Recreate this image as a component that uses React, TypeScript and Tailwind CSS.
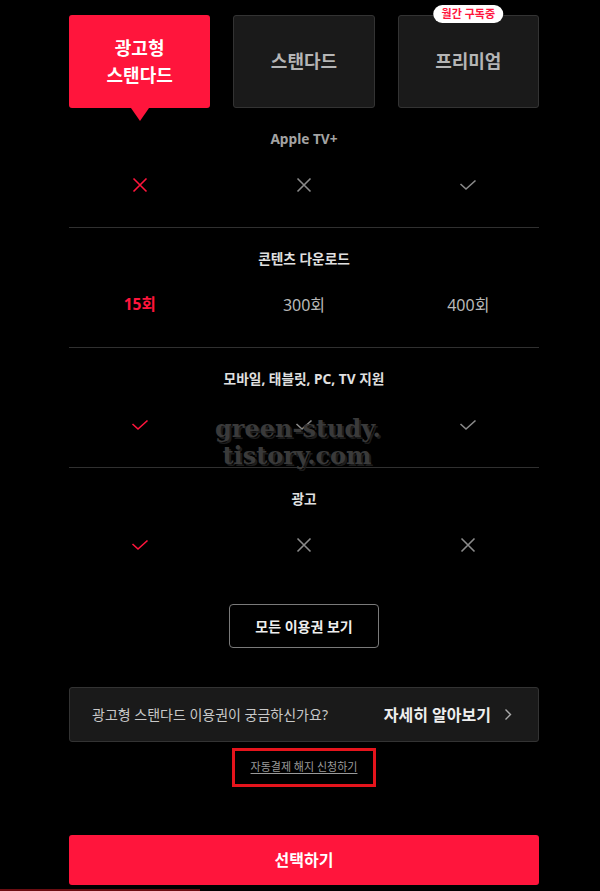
import React from "react";

const RED = "#ff153c";

function XIcon({ color }: { color: string }) {
  return (
    <svg width="18" height="18" viewBox="0 0 18 18" fill="none">
      <path d="M2.5 2.5 L15.5 15.5 M15.5 2.5 L2.5 15.5" stroke={color} strokeWidth="1.6" strokeLinecap="butt" />
    </svg>
  );
}

function CheckIcon({ color }: { color: string }) {
  return (
    <svg width="18" height="18" viewBox="0 0 18 18" fill="none">
      <path d="M1.5 8 L7 13 L16.5 4.5" stroke={color} strokeWidth="1.6" strokeLinecap="butt" strokeLinejoin="miter" />
    </svg>
  );
}

function Cell({ children }: { children: React.ReactNode }) {
  return <div className="flex h-6 items-center justify-center">{children}</div>;
}

function Section({
  label,
  labelClass,
  cells,
  divider = true,
}: {
  label: string;
  labelClass: string;
  cells: React.ReactNode[];
  divider?: boolean;
}) {
  return (
    <div className={`pt-[22px] pb-[30px] ${divider ? "border-b border-[#303030]" : ""}`}>
      <div className={`text-center text-[13.7px] font-bold leading-[18px] ${labelClass}`}>{label}</div>
      <div className="mt-[25px] grid grid-cols-3 gap-[23px]">
        {cells.map((c, i) => (
          <Cell key={i}>{c}</Cell>
        ))}
      </div>
    </div>
  );
}

export default function App() {
  const gray = "#8a8a8a";
  return (
    <div
      className="relative min-h-[891px] w-[600px] bg-black"
      style={{ fontFamily: '"Noto Sans", "Noto Sans CJK KR", sans-serif' }}
    >
      <div className="ml-[69px] w-[470px] pt-[15px]">
        {/* plan cards */}
        <div className="grid grid-cols-3 gap-[23px]">
          <div className="relative flex h-[93px] flex-col items-center justify-center rounded-[3px] bg-[#ff153c] text-[18px] font-bold leading-[27px] text-white">
            <span>광고형</span>
            <span>스탠다드</span>
            <div className="absolute left-1/2 top-full h-0 w-0 -translate-x-1/2 border-x-[9px] border-t-[13px] border-x-transparent border-t-[#ff153c]" />
          </div>
          <div className="flex h-[93px] items-center justify-center rounded-[3px] border border-[#333] bg-[#1a1a1a] text-[18px] font-bold text-[#b5b5b5]">
            스탠다드
          </div>
          <div className="relative flex h-[93px] items-center justify-center rounded-[3px] border border-[#333] bg-[#1a1a1a] text-[18px] font-bold text-[#b5b5b5]">
            프리미엄
            <div className="absolute left-1/2 top-[-11px] flex h-[18px] -translate-x-1/2 items-center whitespace-nowrap rounded-full bg-white px-[8px] text-[11px] font-bold text-[#ff153c]">
              월간 구독중
            </div>
          </div>
        </div>

        {/* features */}
        <Section
          label="Apple TV+"
          labelClass="text-[#a3a3a3]"
          cells={[<XIcon color={RED} />, <XIcon color={gray} />, <CheckIcon color={gray} />]}
        />
        <Section
          label="콘텐츠 다운로드"
          labelClass="text-[#e0e0e0]"
          cells={[
            <span className="text-[15.5px] font-bold text-[#ff153c]">15회</span>,
            <span className="text-[16px] text-[#b8b8b8]">300회</span>,
            <span className="text-[16px] text-[#b8b8b8]">400회</span>,
          ]}
        />
        <Section
          label="모바일, 태블릿, PC, TV 지원"
          labelClass="text-[#e0e0e0]"
          cells={[<CheckIcon color={RED} />, <CheckIcon color={gray} />, <CheckIcon color={gray} />]}
        />
        <Section
          label="광고"
          labelClass="text-[#e0e0e0]"
          divider={false}
          cells={[<CheckIcon color={RED} />, <XIcon color={gray} />, <XIcon color={gray} />]}
        />

        <div className="mt-[17px] flex justify-center">
          <button className="h-[44px] w-[150px] rounded-[4px] border border-[#7a7a7a] bg-black text-[14px] font-bold text-[#eeeeee]">
            모든 이용권 보기
          </button>
        </div>

        <div className="mt-[39px] flex h-[55px] items-center justify-between rounded-[3px] border border-[#333] bg-[#1a1a1a] pl-[22px] pr-[26px]">
          <span className="text-[14px] text-[#c8c8c8]">광고형 스탠다드 이용권이 궁금하신가요?</span>
          <span className="flex items-center gap-[13px]">
            <span className="text-[16px] font-bold text-[#eeeeee]">자세히 알아보기</span>
            <svg width="8" height="13" viewBox="0 0 8 13" fill="none">
              <path d="M1.5 1.5 L6.5 6.5 L1.5 11.5" stroke="#aaaaaa" strokeWidth="1.4" />
            </svg>
          </span>
        </div>

        <div className="mt-[6px] flex justify-center">
          <div className="flex h-[39px] w-[144px] items-center justify-center border-[3px] border-[#e5141c]">
            <span className="text-[11px] text-[#9a9a9a] underline underline-offset-2">자동결제 해지 신청하기</span>
          </div>
        </div>

        <button className="mt-[48px] flex h-[50px] w-full items-center justify-center rounded-[3px] bg-[#ff153c] text-[16px] font-bold text-white">
          선택하기
        </button>
      </div>

      <div className="mt-[4px] h-[2px] w-[200px] bg-[#6b0d12]" />

      {/* watermark */}
      <div
        className="pointer-events-none absolute left-[215px] top-[415px] w-[164px] text-center text-[24px] font-bold leading-[27px] text-[#3a3a3a]"
        style={{ fontFamily: '"DejaVu Serif", serif', textShadow: "2px 2px 0 #1c1c1c" }}
      >
        <div className="whitespace-nowrap">green-study.</div>
        <div className="whitespace-nowrap">tistory.com</div>
      </div>
    </div>
  );
}
